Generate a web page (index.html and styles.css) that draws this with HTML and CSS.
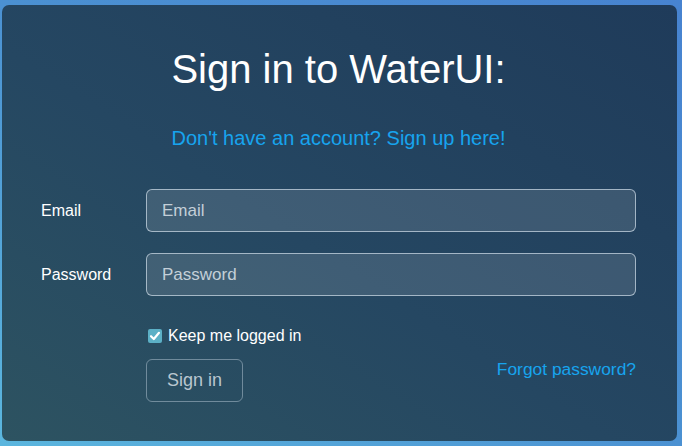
FILE: index.html
```html
<!DOCTYPE html>
<html>
<head>
<meta charset="utf-8">
<link rel="stylesheet" href="styles.css">
</head>
<body>
<div class="card">
  <h1 class="title">Sign in to WaterUI:</h1>
  <a class="signup" href="#">Don't have an account? Sign up here!</a>
  <form class="form">
    <div class="row">
      <label class="label">Email</label>
      <div class="input">Email</div>
    </div>
    <div class="row">
      <label class="label">Password</label>
      <div class="input">Password</div>
    </div>
    <div class="bottom">
      <div class="actions">
        <div class="check-row">
          <span class="checkbox"><svg viewBox="0 0 14 14" width="14" height="14"><path d="M3 7.2 L5.8 10 L11 3.8" fill="none" stroke="#fff" stroke-width="2.2" stroke-linecap="round" stroke-linejoin="round"/></svg></span>
          <span class="check-label">Keep me logged in</span>
        </div>
        <button class="btn" type="button">Sign in</button>
      </div>
      <a class="forgot" href="#">Forgot password?</a>
    </div>
  </form>
</div>
</body>
</html>
```

FILE: styles.css
```css
html, body {
  margin: 0;
  padding: 0;
  height: 100%;
}
body {
  background: linear-gradient(to top right, #5bb6de 0%, #4b91d2 50%, #4783d0 100%);
  font-family: "Liberation Sans", Arial, sans-serif;
  padding: 5px 5px 5px 2px;
  box-sizing: border-box;
  height: 446px;
  overflow: hidden;
}
.card {
  height: 436px;
  width: 675px;
  box-sizing: border-box;
  border-radius: 7px;
  background: linear-gradient(to top right, #2d5361 0%, #254762 45%, #1f3b5a 100%);
  padding: 41px 41px 0 39px;
  display: flex;
  flex-direction: column;
  align-items: center;
  color: #fff;
}
.title {
  margin: 0;
  font-weight: normal;
  font-size: 40px;
  line-height: 46px;
  color: #fff;
}
.signup {
  margin-top: 35px;
  font-size: 20px;
  line-height: 23px;
  color: #17a4ee;
  text-decoration: none;
}
.form {
  margin-top: 39px;
  width: 100%;
  display: flex;
  flex-direction: column;
  gap: 21px;
}
.row {
  display: flex;
  align-items: center;
}
.label {
  width: 105px;
  font-size: 16px;
  color: #fff;
}
.input {
  flex: 1;
  height: 43px;
  box-sizing: border-box;
  border: 1px solid rgba(220, 232, 242, 0.65);
  border-radius: 6px;
  background: rgba(255, 255, 255, 0.12);
  padding: 0 15px;
  display: flex;
  align-items: center;
  font-size: 17px;
  color: #c3cfd8;
}
.bottom {
  margin-top: 10px;
  display: flex;
  justify-content: space-between;
  align-items: flex-end;
  padding-left: 105px;
}
.actions {
  display: flex;
  flex-direction: column;
  align-items: flex-start;
  gap: 14px;
}
.check-row {
  display: flex;
  align-items: center;
  gap: 6px;
  padding-left: 2px;
}
.checkbox {
  width: 14px;
  height: 14px;
  border-radius: 2px;
  background: #5cb0c6;
  display: flex;
}
.check-label {
  font-size: 16px;
  color: #fff;
}
.btn {
  height: 43px;
  padding: 0 20px;
  border: 1px solid rgba(200, 215, 228, 0.45);
  border-radius: 6px;
  background: transparent;
  color: #b9c6cf;
  font-family: "Liberation Sans", Arial, sans-serif;
  font-size: 18px;
}
.forgot {
  font-size: 17.4px;
  color: #17a4ee;
  text-decoration: none;
  margin-bottom: 22px;
}
```
